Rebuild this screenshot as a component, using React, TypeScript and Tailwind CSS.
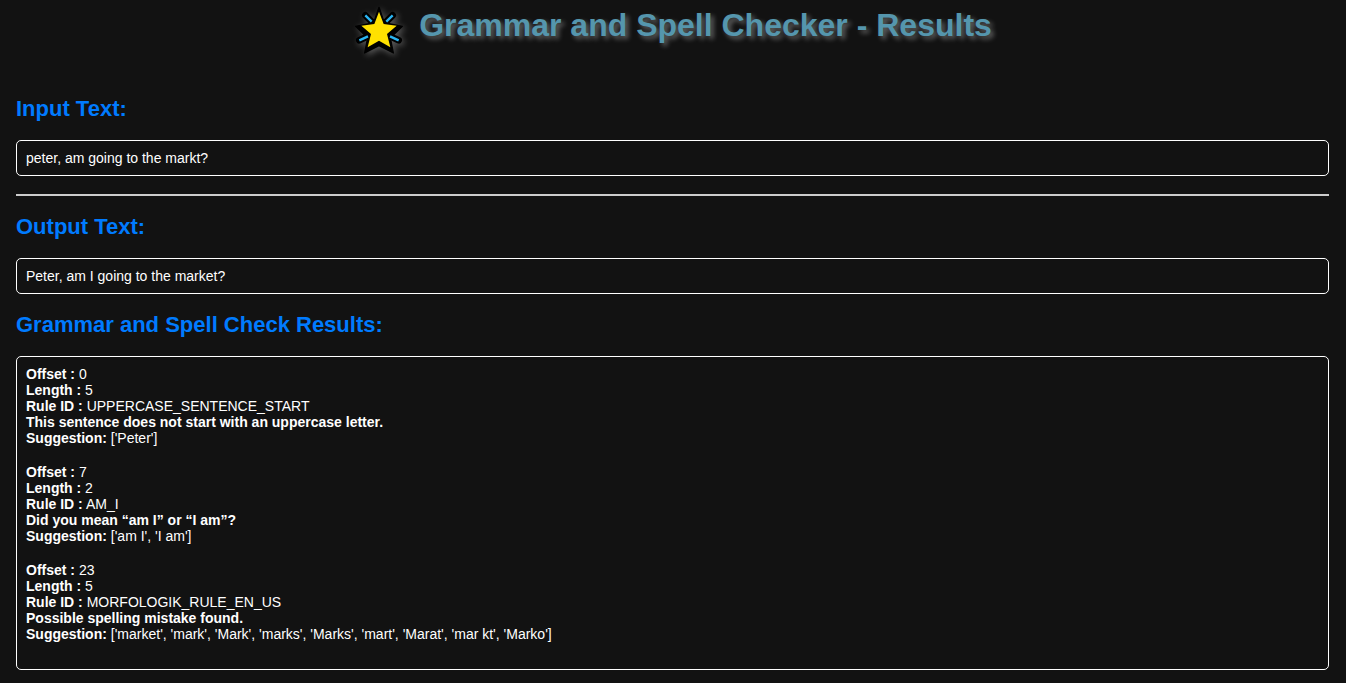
import type { ReactNode } from "react";

type Issue = {
  offset: number;
  length: number;
  ruleId: string;
  message: string;
  suggestions: string;
};

const issues: Issue[] = [
  {
    offset: 0,
    length: 5,
    ruleId: "UPPERCASE_SENTENCE_START",
    message: "This sentence does not start with an uppercase letter.",
    suggestions: "['Peter']",
  },
  {
    offset: 7,
    length: 2,
    ruleId: "AM_I",
    message: "Did you mean “am I” or “I am”?",
    suggestions: "['am I', 'I am']",
  },
  {
    offset: 23,
    length: 5,
    ruleId: "MORFOLOGIK_RULE_EN_US",
    message: "Possible spelling mistake found.",
    suggestions:
      "['market', 'mark', 'Mark', 'marks', 'Marks', 'mart', 'Marat', 'mar kt', 'Marko']",
  },
];

function StarIcon() {
  return (
    <svg
      viewBox="0 0 156 156"
      className="size-[52px] shrink-0 overflow-visible drop-shadow-[2px_2px_3px_rgba(255,255,255,0.3)]"
      aria-hidden="true"
    >
      <path
        d="M37 34L56 53M119 34L100 53M19 109L45 97M137 109L111 97"
        fill="none"
        stroke="#000"
        strokeWidth="20"
        strokeLinecap="round"
      />
      <path
        d="M78 10L94 56 148 67 112 102 121 147 78 125 35 147 44 102 8 67 62 56z"
        fill="#000"
        stroke="#000"
        strokeWidth="4"
        strokeLinejoin="round"
      />
      <path
        d="M78 23L92 60 131 65 102 90 112 130 78 110 44 130 54 90 25 65 64 60z"
        fill="#ffe100"
      />
      <path
        d="M37 34L56 53M119 34L100 53M19 109L45 97M137 109L111 97"
        fill="none"
        stroke="#2ab4f2"
        strokeWidth="7"
      />
    </svg>
  );
}

function SectionTitle({ children }: { children: ReactNode }) {
  return <h2 className="text-[22px] leading-[26px] font-bold text-[#007bff]">{children}</h2>;
}

function Panel({ children }: { children: ReactNode }) {
  return (
    <div className="mt-[18px] rounded-[5px] border border-white p-[9px] text-[14px] leading-4">
      {children}
    </div>
  );
}

export default function App() {
  return (
    <div className="min-h-screen bg-[#121212] pr-[17px] pb-3 pl-4 font-['Liberation_Sans',Arial,sans-serif] text-white">
      <header className="flex h-24 items-start justify-center gap-3.5 pt-1">
        <StarIcon />
        <h1 className="pt-[3px] text-[32px] leading-9 font-bold text-[#5596ad] [text-shadow:3px_3px_5px_rgba(255,255,255,0.35)]">
          Grammar and Spell Checker - Results
        </h1>
      </header>

      <main>
        <section>
          <SectionTitle>Input Text:</SectionTitle>
          <Panel>peter, am going to the markt?</Panel>
        </section>

        <hr className="my-[18px] border-t-2 border-[#cccccc]" />

        <section>
          <SectionTitle>Output Text:</SectionTitle>
          <Panel>Peter, am I going to the market?</Panel>
        </section>

        <section className="mt-[18px]">
          <SectionTitle>Grammar and Spell Check Results:</SectionTitle>
          <Panel>
            {issues.map((issue) => (
              <div key={issue.offset} className="mb-[18px]">
                <p>
                  <b>Offset :</b> {issue.offset}
                </p>
                <p>
                  <b>Length :</b> {issue.length}
                </p>
                <p>
                  <b>Rule ID :</b> {issue.ruleId}
                </p>
                <p>
                  <b>{issue.message}</b>
                </p>
                <p>
                  <b>Suggestion:</b> {issue.suggestions}
                </p>
              </div>
            ))}
          </Panel>
        </section>
      </main>
    </div>
  );
}
